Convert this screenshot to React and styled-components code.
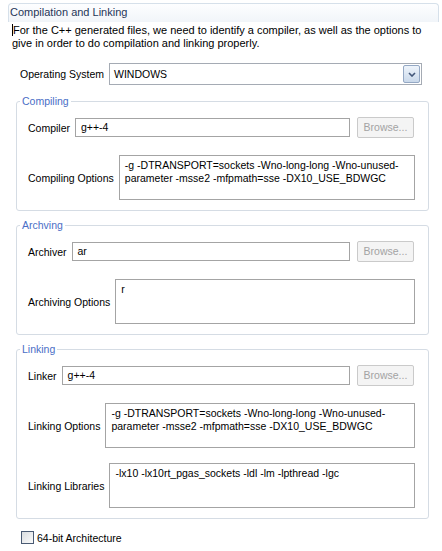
import React from "react";
import styled, { createGlobalStyle } from "styled-components";

const GlobalStyle = createGlobalStyle`
  body {
    margin: 0;
    background: #ffffff;
    font-family: "Liberation Sans", Arial, sans-serif;
    font-size: 10.5px;
    color: #000000;
  }
`;

const Page = styled.div`
  width: 442px;
  box-sizing: border-box;
  padding: 3px 3px 0 8px;
`;

const SectionHeader = styled.div`
  height: 19px;
  box-sizing: border-box;
  border: 1px solid #d6e0ea;
  border-bottom: none;
  border-radius: 4px 4px 0 0;
  background: linear-gradient(to bottom, #fdfeff, #f1f5f9);
  color: #1f3658;
  padding-left: 1px;
  line-height: 17px;
  font-size: 11px;
`;

const Description = styled.div`
  margin: 2px 0 0 4px;
  line-height: 13px;
  font-size: 11px;
`;

const Caret = styled.span`
  display: inline-block;
  width: 1px;
  height: 12px;
  background: #000000;
  vertical-align: -2px;
`;

const OsRow = styled.div`
  display: flex;
  align-items: center;
  gap: 5px;
  margin: 13px 17px 0 12px;
`;

const Label = styled.span`
  white-space: nowrap;
`;

const Combo = styled.div`
  flex: 1;
  height: 22px;
  box-sizing: border-box;
  border: 1px solid #a5abb4;
  display: flex;
  align-items: center;
  padding: 1px;
  background: #ffffff;
`;

const ComboText = styled.span`
  flex: 1;
  padding-left: 3px;
`;

const ComboButton = styled.div`
  width: 17px;
  height: 18px;
  box-sizing: border-box;
  border: 1px solid #94a8c4;
  border-radius: 2px;
  background: linear-gradient(to bottom, #eef4fb, #c9d8ea);
  display: flex;
  align-items: center;
  justify-content: center;
`;

const Group = styled.fieldset`
  margin: ${(p) => p.$top}px 10px 0 8px;
  border: 1px solid #d5dce4;
  border-radius: 3px;
  padding: 9px 14px 10px 11px;
  min-width: 0;
`;

const Legend = styled.legend`
  color: #4a6ec6;
  padding: 0 2px;
  margin-left: -8px;
  line-height: 13px;
`;

const Row = styled.div`
  display: flex;
  align-items: center;
  gap: 5px;
  margin-top: ${(p) => p.$top || 0}px;
`;

const TextInput = styled.div`
  flex: 1;
  height: 19px;
  box-sizing: border-box;
  border: 1px solid #a4a4a4;
  padding-left: 5px;
  line-height: 17px;
  white-space: nowrap;
`;

const BrowseButton = styled.div`
  width: 57px;
  height: 21px;
  box-sizing: border-box;
  margin-left: 2px;
  border: 1px solid #cacaca;
  border-radius: 2px;
  background: #f4f4f4;
  color: #a3a3a3;
  text-align: center;
  line-height: 19px;
`;

const TextArea = styled.div`
  flex: 1;
  height: 45px;
  box-sizing: border-box;
  border: 1px solid #a4a4a4;
  padding: 3px 5px;
  line-height: 13px;
  white-space: pre-wrap;
  margin-right: -1px;
`;

const CheckRow = styled.label`
  display: flex;
  align-items: center;
  gap: 3px;
  margin: 12px 0 0 13px;
`;

const CheckBox = styled.span`
  width: 13px;
  height: 13px;
  box-sizing: border-box;
  border: 1px solid #4a5a73;
  background: linear-gradient(135deg, #d9dcdf, #fbfbfb);
`;

const Chevron = () => (
  <svg width="8" height="5" viewBox="0 0 8 5">
    <path d="M1 1 L4 4 L7 1" fill="none" stroke="#43577a" strokeWidth="1.6" />
  </svg>
);

const App = () => {
  return (
    <Page>
      <GlobalStyle />
      <SectionHeader>Compilation and Linking</SectionHeader>
      <Description>
        <Caret />
        For the C++ generated files, we need to identify a compiler, as well as the options to
        <br />
        give in order to do compilation and linking properly.
      </Description>

      <OsRow>
        <Label>Operating System</Label>
        <Combo>
          <ComboText>WINDOWS</ComboText>
          <ComboButton>
            <Chevron />
          </ComboButton>
        </Combo>
      </OsRow>

      <Group $top={10}>
        <Legend>Compiling</Legend>
        <Row>
          <Label>Compiler</Label>
          <TextInput>g++-4</TextInput>
          <BrowseButton>Browse...</BrowseButton>
        </Row>
        <Row $top={17}>
          <Label>Compiling Options</Label>
          <TextArea>
            {"-g -DTRANSPORT=sockets -Wno-long-long -Wno-unused-\nparameter -msse2 -mfpmath=sse -DX10_USE_BDWGC"}
          </TextArea>
        </Row>
      </Group>

      <Group $top={8}>
        <Legend>Archving</Legend>
        <Row>
          <Label>Archiver</Label>
          <TextInput>ar</TextInput>
          <BrowseButton>Browse...</BrowseButton>
        </Row>
        <Row $top={17}>
          <Label>Archiving Options</Label>
          <TextArea>r</TextArea>
        </Row>
      </Group>

      <Group $top={8}>
        <Legend>Linking</Legend>
        <Row>
          <Label>Linker</Label>
          <TextInput>g++-4</TextInput>
          <BrowseButton>Browse...</BrowseButton>
        </Row>
        <Row $top={17}>
          <Label>Linking Options</Label>
          <TextArea>
            {"-g -DTRANSPORT=sockets -Wno-long-long -Wno-unused-\nparameter -msse2 -mfpmath=sse -DX10_USE_BDWGC"}
          </TextArea>
        </Row>
        <Row $top={15}>
          <Label>Linking Libraries</Label>
          <TextArea>-lx10 -lx10rt_pgas_sockets -ldl -lm -lpthread -lgc</TextArea>
        </Row>
      </Group>

      <CheckRow>
        <CheckBox />
        <span>64-bit Architecture</span>
      </CheckRow>
    </Page>
  );
};

export default App;
